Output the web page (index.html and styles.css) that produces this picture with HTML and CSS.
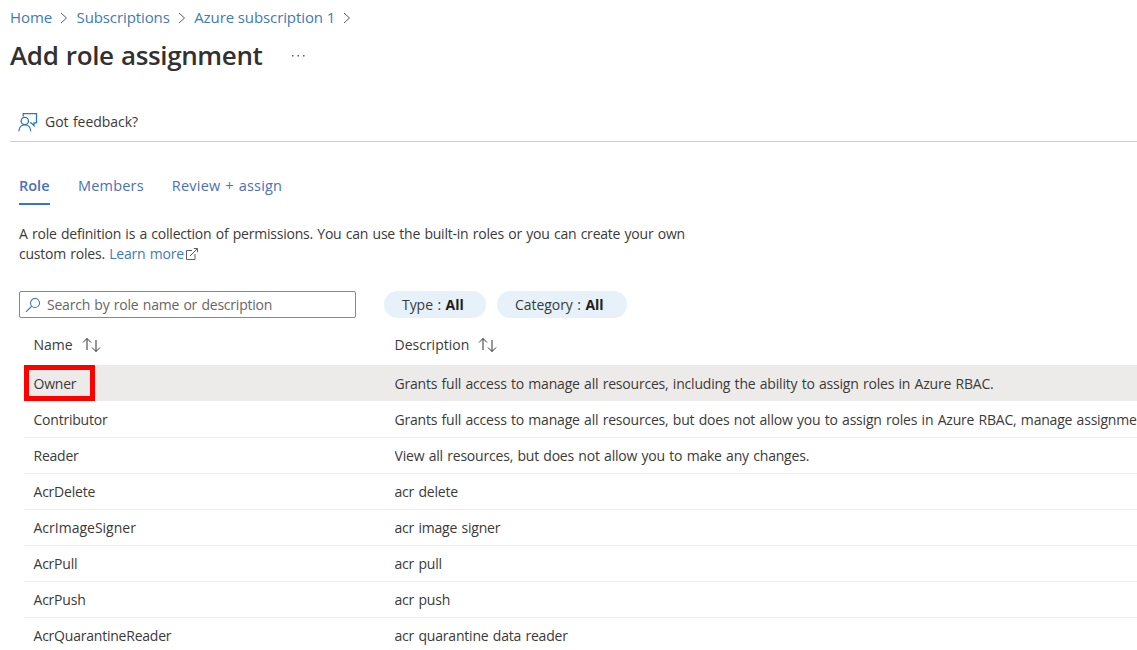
FILE: index.html
```html
<!DOCTYPE html>
<html lang="en">
<head>
<meta charset="utf-8">
<title>Add role assignment</title>
<link rel="stylesheet" href="styles.css">
</head>
<body>
<nav class="crumbs">
  <a>Home</a>
  <svg class="chev" viewBox="0 0 8 12"><path d="M1 1l5.500 5L1 11"/></svg>
  <a>Subscriptions</a>
  <svg class="chev" viewBox="0 0 8 12"><path d="M1 1l5.500 5L1 11"/></svg>
  <a>Azure subscription 1</a>
  <svg class="chev" viewBox="0 0 8 12"><path d="M1 1l5.500 5L1 11"/></svg>
</nav>
<header class="title">
  <h1>Add role assignment</h1>
  <svg class="dots" viewBox="0 0 13 3"><path d="M0 1h1.500v1.500H0zM5.500 1H7v1.500H5.500zM11 1h1.500v1.500H11z"/></svg>
</header>
<div class="toolbar">
  <svg class="feedback" viewBox="0 0 20 20"><path d="M5.200 4.500V1.600h13.300v9.300h-2.500v2.800l-2.800-2.800h-1.200"/><circle cx="6.800" cy="9" r="3.700"/><path d="M.9 19.200c0-3.800 2.500-6.300 5.900-6.300s5.900 2.500 5.900 6.300"/></svg>
  <span>Got feedback?</span>
</div>
<main>
  <div class="tabs">
    <a class="tab active">Role</a>
    <a class="tab">Members</a>
    <a class="tab">Review + assign</a>
  </div>
  <p class="intro">A role definition is a collection of permissions. You can use the built-in roles or you can create your own<br>custom roles. <a>Learn more</a><svg class="ext" viewBox="0 0 12 12"><path d="M6 2.500H.5v9h8.500V6M4 8l7.300-7.300M7.800.5h3.700v3.700"/></svg></p>
  <div class="filters">
    <div class="search">
      <svg class="glass" viewBox="0 0 16 16"><circle cx="10" cy="6" r="4.500"/><path d="M6.700 9.200L1 14.900"/></svg>
      <span>Search by role name or description</span>
    </div>
    <div class="pill type"><span>Type : <b>All</b></span></div>
    <div class="pill category"><span>Category : <b>All</b></span></div>
  </div>
  <div class="grid">
    <div class="row head">
      <div class="name"><span>Name</span><svg class="sort" viewBox="0 0 19 16"><path d="M5 13V1.500M1 5.500l4-4 4 4M14 3v11.500M10 10.500l4 4 4-4"/></svg></div>
      <div class="desc"><span>Description</span><svg class="sort" viewBox="0 0 19 16"><path d="M5 13V1.500M1 5.500l4-4 4 4M14 3v11.500M10 10.500l4 4 4-4"/></svg></div>
    </div>
    <div class="row selected"><div class="name">Owner</div><div class="desc">Grants full access to manage all resources, including the ability to assign roles in Azure RBAC.</div></div>
    <div class="row"><div class="name">Contributor</div><div class="desc">Grants full access to manage all resources, but does not allow you to assign roles in Azure RBAC, manage assignments</div></div>
    <div class="row"><div class="name">Reader</div><div class="desc">View all resources, but does not allow you to make any changes.</div></div>
    <div class="row"><div class="name">AcrDelete</div><div class="desc">acr delete</div></div>
    <div class="row"><div class="name wide">AcrImageSigner</div><div class="desc">acr image signer</div></div>
    <div class="row"><div class="name">AcrPull</div><div class="desc">acr pull</div></div>
    <div class="row"><div class="name">AcrPush</div><div class="desc">acr push</div></div>
    <div class="row"><div class="name">AcrQuarantineReader</div><div class="desc">acr quarantine data reader</div></div>
  </div>
</main>
</body>
</html>
```
FILE: styles.css
```css
*, *::before { box-sizing: border-box; }
body {
  margin: 0;
  height: 650px;
  overflow: hidden;
  background: #fff;
  color: #3b3a39;
  font: 14px/20px "Open Sans", "Noto Sans", sans-serif;
  letter-spacing: -0.22px;
  word-spacing: 0.9px;
  white-space: nowrap;
}
svg { display: block; flex: none; fill: none; stroke: #605e5c; }
a { color: #3f7ab8; }
.crumbs { display: flex; align-items: center; height: 36px; padding: 0 0 2px 10px; font-size: 15px; letter-spacing: -0.1px; word-spacing: 0; }
.chev { width: 8px; height: 12px; margin: 1px 8.500px 0 8px; stroke-width: 1; }
.title { display: flex; align-items: center; height: 37px; padding-left: 10px; }
h1 { margin: 0; width: 253px; color: #323130; font-size: 26px; line-height: 36px; font-weight: 600; letter-spacing: -0.36px; }
.dots { width: 13px; height: 3px; margin: 2px 0 0 29px; fill: #605e5c; stroke: none; }
.toolbar { display: flex; align-items: center; height: 40px; margin: 29px 0 0 10px; padding-left: 8px; border-bottom: 1px solid #d2d0ce; letter-spacing: -0.05px; }
.feedback { width: 20px; height: 20px; margin-right: 7px; stroke: #2b78b8; stroke-width: 1.3; }
main { padding-left: 19px; }
.tabs { display: flex; gap: 28px; height: 63px; padding-top: 34px; font-size: 14.5px; letter-spacing: 0.2px; }
.tab { height: 29px; color: #4a70bd; }
.tab.active { width: 31px; letter-spacing: 0; font-weight: 600; border-bottom: 2px solid #3b74c0; }
.intro { margin: 19px 0 0; }
.ext { display: inline-block; width: 12px; height: 12px; margin-left: 2px; vertical-align: -1px; }
.filters { display: flex; height: 27px; margin-top: 27px; }
.search { display: flex; align-items: center; width: 337px; border: 1px solid #8a8886; border-radius: 2px; padding-left: 5px; color: #686664; }
.glass { width: 16px; height: 16px; margin-right: 6px; stroke: #2b78b8; stroke-width: 1.1; }
.pill { display: flex; align-items: center; padding-left: 18px; border-radius: 14px; background: #e6f1fa; letter-spacing: -0.05px; }
.pill b { color: #201f1e; }
.type { width: 102px; margin-left: 28px; }
.category { width: 130px; margin-left: 11px; }
.grid { margin-left: 5px; }
.row { display: flex; align-items: center; height: 36px; padding: 1px 0 0 9.500px; border-top: 1px solid #efeeed; }
.name { flex: none; width: 361px; }
.wide { letter-spacing: 0; }
.desc { flex: 1; min-width: 0; overflow: hidden; letter-spacing: -0.2px; }
.head { height: 47px; padding-top: 6px; border-top: 0; font-weight: 500; }
.head div { display: flex; align-items: center; letter-spacing: 0; }
.sort { width: 19px; height: 16px; margin-left: 9px; stroke: #323130; }
.selected { position: relative; background: #edebe9; border-top-color: #edebe9; }
.selected + .row { border-top-color: #fff; }
.selected::before { content: ""; position: absolute; left: 0; top: -1px; width: 71px; height: 36px; border: 5px solid #f00; }
```
